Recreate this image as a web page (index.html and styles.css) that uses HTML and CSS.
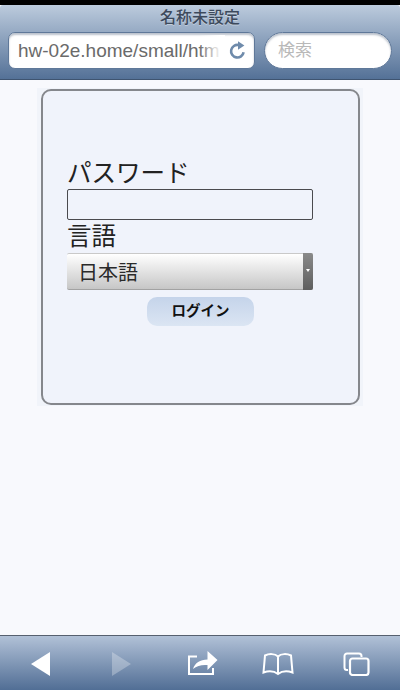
FILE: index.html
```html
<!DOCTYPE html>
<html lang="ja">
<head>
<meta charset="utf-8">
<title>名称未設定</title>
<link rel="stylesheet" href="styles.css">
</head>
<body>
<div class="app">
  <div class="status"></div>
  <header class="navbar">
    <div class="title">名称未設定</div>
    <div class="bars">
      <div class="url">
        <span class="url-text">hw-02e.home/small/htm</span>
        <span class="fade"></span>
        <svg class="reload" width="20" height="20" viewBox="0 0 20 20">
          <path d="M15.6 11.2A6.3 6.3 0 1 1 10.6 4" fill="none" stroke="#6f8bab" stroke-width="2.6"/>
          <path d="M10 0.2L16.4 4.4L10 8.8Z" fill="#6f8bab"/>
        </svg>
      </div>
      <div class="search">検索</div>
    </div>
  </header>
  <main class="page">
    <div class="halo">
      <form class="panel">
        <div class="label">パスワード</div>
        <div class="input"></div>
        <div class="label">言語</div>
        <div class="select">
          <span class="select-value">日本語</span>
          <span class="select-arrow"><i class="arrow"></i></span>
        </div>
        <div class="actions"><div class="button">ログイン</div></div>
      </form>
    </div>
  </main>
  <footer class="toolbar">
    <svg class="tool" width="20" height="24" viewBox="0 0 20 24"><path d="M0 12L19 0V24Z" fill="#fff"/></svg>
    <svg class="tool tool-forward" width="20" height="24" viewBox="0 0 20 24"><path d="M20 12L1 0V24Z" fill="#fff" fill-opacity=".28"/></svg>
    <svg class="tool tool-share" width="30" height="25" viewBox="0 0 30 25">
      <path d="M9 5.500H1V23H25V17" fill="none" stroke="#fff" stroke-width="2"/>
      <path d="M5 18C7 12 12 8.500 19.500 8.500V0L29.500 9L19.500 19V14C14 13.500 9 14.500 5 18Z" fill="#fff"/>
    </svg>
    <svg class="tool tool-book" width="32" height="24" viewBox="0 0 32 24">
      <path d="M16 4.500C13 1.500 7 1.500 3 3.500L1.500 20.500C6 19 12 19 16 22C20 19 26 19 30.500 20.500L29 3.500C25 1.500 19 1.500 16 4.500ZM16 4.500V22" fill="none" stroke="#fff" stroke-width="2"/>
    </svg>
    <svg class="tool tool-tabs" width="27" height="24" viewBox="0 0 27 24">
      <path d="M5 18H4A2.500 2.500 0 0 1 1.500 15.500V4A2.500 2.500 0 0 1 4 1.500H16A2.500 2.500 0 0 1 18.500 4V5" fill="none" stroke="#fff" stroke-width="2"/>
      <rect x="7" y="6.500" width="18.500" height="16.500" rx="2.500" fill="none" stroke="#fff" stroke-width="2.200"/>
    </svg>
  </footer>
</div>
</body>
</html>
```
FILE: styles.css
```css
* { box-sizing: border-box; }
html, body { margin: 0; padding: 0; }
body {
  width: 400px;
  height: 690px;
  overflow: hidden;
  font-family: "Liberation Sans", "Noto Sans CJK JP", sans-serif;
}
.app { display: flex; flex-direction: column; height: 690px; background: #f8f9fd; }
.status { height: 5px; background: #000; flex: none; }
.navbar {
  flex: none;
  height: 75px;
  padding: 3px 8px 0;
  background: linear-gradient(#bccbdd, #547197);
  border-bottom: 1px solid #3f5470;
  border-radius: 3px 3px 0 0;
}
.title {
  height: 19px;
  line-height: 19px;
  text-align: center;
  font-size: 16px;
  font-weight: 500;
  color: #3d4a5c;
  text-shadow: 0 1px 0 rgba(255,255,255,.35);
}
.bars { display: flex; gap: 9px; margin-top: 5px; }
.url {
  position: relative;
  width: 247px;
  height: 37px;
  display: flex;
  align-items: center;
  padding: 1px 0 0 9px;
  background: #fff;
  border-radius: 7px;
  overflow: hidden;
  border: 1px solid #5f7899;
  box-shadow: inset 0 2px 2px rgba(60,80,110,.35);
}
.url-text { font-size: 19px; color: #6a6a6a; white-space: nowrap; }
.fade {
  position: absolute;
  top: 2px;
  right: 29px;
  width: 26px;
  height: 32px;
  background: linear-gradient(90deg, rgba(255,255,255,0), #fff 85%);
}
.reload { position: absolute; top: 8px; right: 6px; background: #fff; width: 20px; height: 20px; }
.search {
  width: 128px;
  height: 37px;
  line-height: 36px;
  padding-left: 13px;
  font-size: 17px;
  color: #b9b9b9;
  background: #fff;
  border: 1px solid #5f7899;
  border-radius: 19px;
  box-shadow: inset 0 2px 2px rgba(60,80,110,.35);
}
.page { flex: 1; padding: 8px 37px 0; }
.halo { background: #f1f4fa; padding: 1px 3px 1px 4px; height: 318px; }
.panel {
  height: 316px;
  padding: 67px 45px 0 24px;
  background: #f0f3fb;
  border: 2px solid #85878c;
  border-radius: 10px;
}
.label { font-size: 24.500px; line-height: 32px; color: #222; height: 32px; }
.input {
  height: 31px;
  margin-top: -1px;
  background: #f0f3fb;
  border: 1px solid #4a4a4e;
  border-radius: 2px;
}
.input + .label { margin-top: 1px; }
.select {
  position: relative;
  height: 37px;
  display: flex;
  align-items: center;
  padding-left: 11px;
  background: linear-gradient(#ffffff, #c6c6c6);
  border-top: 1px solid #c9c9c9;
  border-bottom: 1px solid #a2a2a2;
  border-radius: 2px;
  font-size: 20px;
  color: #2a2a2a;
}
.select-arrow {
  position: absolute;
  top: -1px;
  bottom: -1px;
  right: 0;
  width: 10px;
  background: linear-gradient(#8a8a8a, #5e5e5e);
  border-radius: 0 2px 2px 0;
  display: flex;
  align-items: center;
  justify-content: center;
  padding-bottom: 3px;
}
.arrow {
  display: block;
  border-top: 3px solid #fff;
  border-left: 2px solid transparent;
  border-right: 2px solid transparent;
}
.actions { display: flex; justify-content: center; margin-top: 7px; padding-left: 21px; }
.button {
  width: 107px;
  height: 29px;
  line-height: 28px;
  text-align: center;
  font-size: 14.500px;
  font-weight: 700;
  color: #111;
  background: linear-gradient(#c5d4ea, #dbe5f3);
  border-radius: 10px;
}
.toolbar {
  flex: none;
  height: 55px;
  display: flex;
  align-items: center;
  padding: 1px 0 0 31px;
  background: linear-gradient(#b1c1d7, #516e95);
  border-top: 1px solid #56606f;
}
.tool-forward { margin-left: 60px; }
.tool-share { margin-left: 57px; }
.tool-book { margin-left: 44px; }
.tool-tabs { margin-left: 49px; }
```
